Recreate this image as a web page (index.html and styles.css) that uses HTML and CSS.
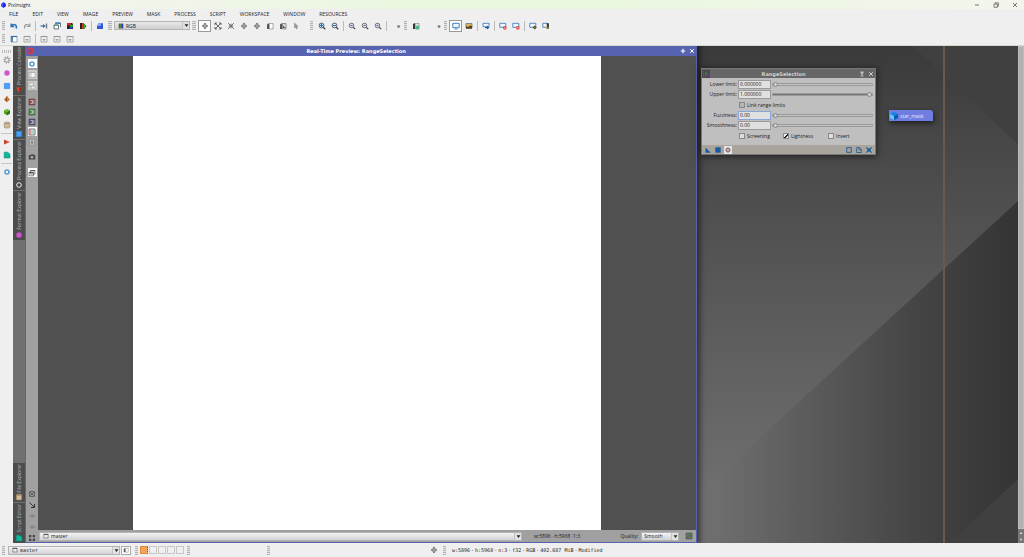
FILE: index.html
```html
<!DOCTYPE html>
<html lang="en">
<head>
<meta charset="utf-8">
<title>PixInsight</title>
<link rel="stylesheet" href="styles.css">
</head>
<body>
<svg class="sprite" aria-hidden="true">
  <symbol id="undo" viewBox="0 0 8 8"><path d="M1.200 1.500v3h3M1.500 4.200C3 1.600 7 1.800 6.400 6.500" fill="none" stroke="#2473b8" stroke-width="1.500"/></symbol>
  <symbol id="redo" viewBox="0 0 8 8"><path d="M6.800 1.500v3h-3M6.500 4.200C5 1.600 1 1.800 1.600 6.500" fill="none" stroke="#999" stroke-width="1.200"/></symbol>
  <symbol id="arrowin" viewBox="0 0 8 8"><path d="M.5 4H5" stroke="#2b6cab" stroke-width="1.200"/><path d="M3 2l2.500 2L3 6z" fill="#2b6cab"/><path d="M6.500 1.500v5" stroke="#777" stroke-width="1.400"/></symbol>
  <symbol id="windows" viewBox="0 0 8 8"><path d="M2.500 1h5v4M1 3h4.500v4H1z" fill="#fff" stroke="#456" stroke-width=".8"/><path d="M2 1.200h5.500" stroke="#2b7abd" stroke-width="1.200"/><path d="M1 3.200h4.500" stroke="#3a8b6b"/></symbol>
  <symbol id="rgb1" viewBox="0 0 8 8"><path d="M1 1h5l1 1v5H1z" fill="#222"/><path d="M1 1h4v2.500H1z" fill="#d22"/><path d="M4 2.800h3v2H4z" fill="#2a3"/><path d="M3.500 5h3v1.700h-3z" fill="#24c"/></symbol>
  <symbol id="rgb2" viewBox="0 0 8 8"><path d="M1 1h3v6H1z" fill="#222"/><path d="M3 1h2v6H3z" fill="#c32"/><path d="M5 2h1v5H5z" fill="#3a3"/><path d="M6 3l1.500 1L6 6z" fill="#24c"/></symbol>
  <symbol id="cube" viewBox="0 0 8 8"><path d="M1 4l1.500-3h4L7 3v4H1z" fill="#3157db"/><path d="M1 4l1.500-3h3L4.500 4z" fill="#8aa8ff"/></symbol>
  <symbol id="bars" viewBox="0 0 8 8"><path d="M1 1h6v6H1z" fill="#444"/><path d="M1.500 1h1.700v6H1.500z" fill="#e22"/><path d="M3.200 1h1.700v6H3.200z" fill="#2c2"/><path d="M4.900 1h1.700v6H4.900z" fill="#23d"/></symbol>
  <symbol id="pan" viewBox="0 0 8 8"><path d="M4 .8l1.600 1.800H2.400zM4 7.200l1.600-1.800H2.400zM.8 4l1.800-1.600v3.200zM7.200 4L5.400 2.400v3.200z" fill="#555"/><path d="M4 2v4M2 4h4" stroke="#777" stroke-width=".8"/></symbol>
  <symbol id="expand" viewBox="0 0 8 8"><path d="M1 3V1h2M5 1h2v2M7 5v2H5M3 7H1V5M1.200 1.200l5.600 5.600M6.800 1.200L1.200 6.800" fill="none" stroke="#555" stroke-width=".9"/></symbol>
  <symbol id="contract" viewBox="0 0 8 8"><path d="M1 1l6 6M7 1L1 7" stroke="#777" stroke-width=".9"/><path d="M3.400 1.800v1.600H1.800M4.600 1.800v1.600h1.600M3.400 6.200V4.600H1.800M4.600 6.200V4.600h1.600" fill="none" stroke="#666" stroke-width=".6"/></symbol>
  <symbol id="pages" viewBox="0 0 8 8"><path d="M3.500 1.500h3.500v5.500H3.500z" fill="#fff" stroke="#888" stroke-width=".7"/><path d="M1 2.500l2-1.500v6H1z" fill="#555"/></symbol>
  <symbol id="pages2" viewBox="0 0 8 8"><path d="M3.500 1.500h3.500v5.500H3.500z" fill="#ddd" stroke="#777" stroke-width=".8"/><path d="M1 2.500l2-1.500v6H1z" fill="#555"/><path d="M4 3.500l2.500 2.500H4z" fill="#555"/></symbol>
  <symbol id="cursor" viewBox="0 0 8 8"><path d="M2.500 1l3.600 3.400H4.500L5.400 6.500l-1 .5-.9-2.100-1 1z" fill="#999" stroke="#777" stroke-width=".4"/></symbol>
  <symbol id="zoomin" viewBox="0 0 8 8"><circle cx="3.500" cy="3.500" r="2.400" fill="#cde4f5" stroke="#456" stroke-width=".9"/><path d="M5.300 5.300L7.300 7.300" stroke="#444" stroke-width="1.300"/><path d="M3.500 2v3M2 3.500h3" stroke="#1f70b5"/></symbol>
  <symbol id="zoomout" viewBox="0 0 8 8"><circle cx="3.500" cy="3.500" r="2.400" fill="#d8e8f2" stroke="#456" stroke-width=".9"/><path d="M5.300 5.300L7.300 7.300" stroke="#444" stroke-width="1.300"/><path d="M2 3.500h3" stroke="#1f70b5"/></symbol>
  <symbol id="zoomone" viewBox="0 0 8 8"><circle cx="3.500" cy="3.500" r="2.300" fill="#e4e4ee" stroke="#666" stroke-width=".9"/><path d="M5.300 5.300L7.200 7.200" stroke="#444" stroke-width="1.200"/><path d="M2.400 3.500h2.200" stroke="#7262bb" stroke-width="1.200"/></symbol>
  <symbol id="maskok" viewBox="0 0 8 8"><path d="M1 2l2-1v6H1z" fill="#333"/><path d="M3.300 1.500H7V7H3.300z" fill="#dfe8e2" stroke="#777" stroke-width=".6"/><circle cx="5.500" cy="5.500" r="1.900" fill="#4bb98a"/></symbol>
  <symbol id="screen" viewBox="0 0 8 8"><path d="M.8 1.300h6.400v4.400H.8z" fill="#eef6ff" stroke="#427fbd"/><path d="M2.500 7h3" stroke="#427fbd"/></symbol>
  <symbol id="screenimg" viewBox="0 0 8 8"><path d="M1 1.500h6v4.500H1z" fill="#e6b64a" stroke="#57789a" stroke-width=".8"/><path d="M1 6.800V4l2 1 2-1.500 2 .5v2.800z" fill="#57451d"/></symbol>
  <symbol id="screendn" viewBox="0 0 8 8"><path d="M1 1.300h6v3.400H1z" fill="#eef6ff" stroke="#427fbd" stroke-width=".9"/><path d="M3 5h2V3.500l2.500 2.200L5 7.600V6.300H3z" fill="#225e9b"/></symbol>
  <symbol id="screenx" viewBox="0 0 8 8"><path d="M.8 1.300h6v4H.8z" fill="#eef6ff" stroke="#427fbd" stroke-width=".9"/><circle cx="5.800" cy="5.800" r="1.900" fill="#e04747"/><path d="M5 5l1.600 1.600M6.600 5L5 6.600" stroke="#fff" stroke-width=".4"/></symbol>
  <symbol id="screenlk" viewBox="0 0 8 8"><path d="M.8 1.300h6v4H.8z" fill="#eef6ff" stroke="#427fbd" stroke-width=".9"/><path d="M5.700 3.400l2 2-2 2-2-2z" fill="#3a3320"/><path d="M5.200 4.800h1v1.400h-1z" fill="#d8a831"/></symbol>
  <symbol id="screenlk2" viewBox="0 0 8 8"><path d="M.8 1.300h5v4h-5z" fill="#eef6ff" stroke="#427fbd" stroke-width=".9"/><path d="M4.500 1.500l2-.5.500 2.500-.5 3.500-2-.5.500-2z" fill="#3a3320"/><path d="M3.500 4.500h2v1.600h-2z" fill="#d8a831"/></symbol>
  <symbol id="panel" viewBox="0 0 8 8"><path d="M1 1.500h6V7H1z" fill="#fff" stroke="#8298ab" stroke-width=".8"/><path d="M.8 1.500h6.400" stroke="#386f9f" stroke-width="1.200"/><path d="M1 2h2v5H1z" fill="#4f86b5"/></symbol>
  <symbol id="panelg" viewBox="0 0 8 8"><path d="M1 1.500h6V7H1z" fill="#eee" stroke="#999" stroke-width=".8"/><path d="M.8 1.500h6.400" stroke="#999" stroke-width="1.100"/><path d="M2.500 4.600h3M4 4v2" stroke="#999" stroke-width=".9"/></symbol>
  <symbol id="gear" viewBox="0 0 8 8"><circle cx="4" cy="4" r="3" fill="none" stroke="#999" stroke-width="1.300" stroke-dasharray="1.300 1"/><circle cx="4" cy="4" r="2" fill="#eee" stroke="#999"/></symbol>
  <symbol id="dot" viewBox="0 0 8 8"><circle cx="4" cy="4" r="2.700" fill="#d152cf"/></symbol>
  <symbol id="blue" viewBox="0 0 8 8"><path d="M1.300 1.300h5.400v5.400H1.300z" fill="#48a0fa" stroke="#2d80d0" stroke-width=".5"/></symbol>
  <symbol id="pawn" viewBox="0 0 8 8"><path d="M4 .8L6 3.500l1.200 1L4 7.200.8 4.500l1.200-1z" fill="#d57c36"/><path d="M4 1v6L2 5z" fill="#8f5225"/></symbol>
  <symbol id="box3d" viewBox="0 0 8 8"><path d="M4 1l3 1.500v3L4 7.200 1 5.500v-3z" fill="#4d9b20"/><path d="M4 1l3 1.500L4 4 1 2.500z" fill="#76c43a"/><path d="M4 4v3.200l3-1.700v-3z" fill="#34711a"/></symbol>
  <symbol id="drum" viewBox="0 0 8 8"><rect x="1.300" y="1.200" width="5.400" height="5.800" rx="1.300" fill="#d2ba91" stroke="#8f8065" stroke-width=".6"/><path d="M1.600 2.500h4.800" stroke="#8f8065" stroke-width=".6"/></symbol>
  <symbol id="play" viewBox="0 0 8 8"><path d="M1.300 1.500L7 4 1.300 6.500z" fill="#e05537"/><path d="M1.300 1.500v5L3 4z" fill="#a12d20"/></symbol>
  <symbol id="teal" viewBox="0 0 8 8"><path d="M1.200 1.200h3.600l2.200 2V7H1.200z" fill="#0cb99c" stroke="#08806d" stroke-width=".5"/></symbol>
  <symbol id="ring" viewBox="0 0 8 8"><circle cx="4" cy="4" r="2" fill="#fff" stroke="#579dd3" stroke-width="1.600"/></symbol>
  <symbol id="wring" viewBox="0 0 8 8"><circle cx="4" cy="4" r="2.300" fill="#444" stroke="#eee" stroke-width="1"/></symbol>
  <symbol id="tri" viewBox="0 0 8 8"><path d="M1.200 1.500h5.600L4 6.800z" fill="#e0492d"/><path d="M4 1.500h2.800L4 6.800z" fill="#9e2c1d"/></symbol>
  <symbol id="target" viewBox="0 0 8 8"><circle cx="4" cy="4" r="2.900" fill="#64509a" stroke="#e23b48" stroke-width="1.100"/><circle cx="4" cy="4" r="1.200" fill="none" stroke="#e23b48" stroke-width=".8"/></symbol>
  <symbol id="split" viewBox="0 0 8 8"><path d="M1 1.500h6v5H1z" fill="#ddd" stroke="#999" stroke-width=".6"/><path d="M4 2h2.700v4H4z" fill="#f4f4f4"/></symbol>
  <symbol id="stack" viewBox="0 0 8 8"><path d="M1 1h4.500v3H1zM3 4h4v3H3z" fill="#eee" stroke="#999" stroke-width=".6"/></symbol>
  <symbol id="chan" viewBox="0 0 8 8"><path d="M1 1h6v6H1z" fill="currentColor"/><path d="M2.500 2.500h2v3h-2M6 2v4" fill="none" stroke="#ccc" stroke-width=".8"/><path d="M1 1h6v6H1z" fill="none" stroke="#333" stroke-opacity=".6" stroke-width=".8"/></symbol>
  <symbol id="alpha" viewBox="0 0 8 8"><path d="M1.500 1.500h5v5.500h-5z" fill="#c4c4c4" stroke="#888" stroke-width=".6"/><path d="M3 5.800L4 2.800l1 3" fill="none" stroke="#666" stroke-width=".8"/></symbol>
  <symbol id="rgbk" viewBox="0 0 8 8"><path d="M1 1h6v6H1z" fill="#ddd" stroke="#555" stroke-width=".8"/><path d="M1.500 1.500h2v5h-2z" fill="#d99"/><path d="M3.500 1.500h1.600v5H3.500z" fill="#adb"/><path d="M5.100 1.500h1.500v5H5.100z" fill="#bbd"/></symbol>
  <symbol id="camera" viewBox="0 0 8 8"><path d="M.8 2h2l.6-.8h2L6 2h1.200v4.500H.8z" fill="#444"/><circle cx="4" cy="4.200" r="1.400" fill="#bbb" stroke="#666" stroke-width=".5"/></symbol>
  <symbol id="layers" viewBox="0 0 8 8"><path d="M2.500 1.500h4.500v3.500H2.500zM1 3.300h4.500V6.800H1z" fill="#fff" stroke="#555" stroke-width=".7"/><path d="M2.500 1.600H7M1 3.600h4.500" stroke="#444" stroke-width=".9"/></symbol>
  <symbol id="fit" viewBox="0 0 8 8"><path d="M1.500 1.500h5v5h-5z" fill="none" stroke="#666"/><path d="M2.200 2.200l3.600 3.600M5.800 2.200L2.200 5.800" stroke="#444" stroke-width=".8"/></symbol>
  <symbol id="diag" viewBox="0 0 8 8"><path d="M1.500 1.500l4.500 4.500M6.500 3v3.500H3" fill="none" stroke="#333"/></symbol>
  <symbol id="plus" viewBox="0 0 8 8"><path d="M1.500 4h5M4 2v4M5.500 2.700L6.800 4 5.500 5.300" fill="none" stroke="#777" stroke-width=".7"/></symbol>
  <symbol id="frame" viewBox="0 0 8 8"><path d="M2 2h4v4H2z" fill="none" stroke="#555" stroke-width=".8"/><path d="M1 1h2v2H1zM5 1h2v2H5zM1 5h2v2H1zM5 5h2v2H5z" fill="#444"/></symbol>
  <symbol id="doc" viewBox="0 0 8 8"><path d="M1.200 1.500h5.600v5.200H1.200z" fill="#eee" stroke="#555" stroke-width=".8"/><path d="M1 2h6" stroke="#555" stroke-width="1.200"/></symbol>
  <symbol id="logo" viewBox="0 0 8 8"><path d="M4 .5l2.500 2 .3 3L4 7.500 1.200 5.500l.3-3z" fill="#1c22ee"/><path d="M4 .5L2.500 4 4 7" fill="none" stroke="#8fa0ff" stroke-width=".6"/></symbol>
  <symbol id="shade" viewBox="0 0 8 8"><path d="M1.500 1.500h5M4 2.500v3M2 6.500h4" stroke="currentColor" stroke-width="1.200"/><path d="M2 2h4L4 4.500z" fill="currentColor"/></symbol>
  <symbol id="close" viewBox="0 0 8 8"><path d="M1.500 1.500l5 5M6.500 1.500l-5 5" stroke="currentColor" stroke-width="1.300"/></symbol>
  <symbol id="add" viewBox="0 0 8 8"><path d="M4 1v6M1 4h6" stroke="currentColor" stroke-width="1.500"/></symbol>
  <symbol id="min" viewBox="0 0 8 8"><path d="M2 4h4" stroke="#555" stroke-width=".8"/></symbol>
  <symbol id="restore" viewBox="0 0 8 8"><path d="M2 3h3.300v3.300H2zM3 3V1.800h3.400v3.400H5.300" fill="none" stroke="#555" stroke-width=".7"/></symbol>
  <symbol id="x" viewBox="0 0 8 8"><path d="M2 2l4 4M6 2L2 6" stroke="#444" stroke-width=".7"/></symbol>
  <symbol id="corner" viewBox="0 0 8 8"><path d="M1.500 1.500v5.200h5.200z" fill="#155ca4"/></symbol>
  <symbol id="square" viewBox="0 0 8 8"><path d="M1.300 1.300h5.400v5.400H1.300z" fill="#155ca4"/></symbol>
  <symbol id="rt" viewBox="0 0 8 8"><circle cx="4" cy="4" r="2.100" fill="#e99a83" stroke="#60688a"/></symbol>
  <symbol id="osq" viewBox="0 0 8 8"><path d="M1.700 1.700h4.600v4.600H1.700z" fill="none" stroke="#255f96"/></symbol>
  <symbol id="odoc" viewBox="0 0 8 8"><path d="M1.700 1.500h2.600l2 2v3H1.700zM4 1.500v2.300h2.300" fill="none" stroke="#255f96" stroke-width=".9"/></symbol>
  <symbol id="reset" viewBox="0 0 8 8"><path d="M1.300 1.300l5.400 5.400M6.700 1.300L1.300 6.700" stroke="#155ca4" stroke-width="1.100"/><path d="M2.500 2.500h3v3h-3z" fill="#155ca4"/></symbol>
  <symbol id="proc" viewBox="0 0 8 8"><path d="M0 0h8v8H0z" fill="#484848"/><path d="M1.500 1v6M6.500 4v3" stroke="#793a9b"/><path d="M3.500 2v5M5 1v4" stroke="#268b2b"/></symbol>
  <symbol id="nav" viewBox="0 0 8 8"><path d="M1 1h6v6H1z" fill="#557e55" stroke="#555" stroke-width=".7"/><path d="M2 6l3-3 1.500 2" fill="none" stroke="#704d79"/></symbol>
  <symbol id="hexcube" viewBox="0 0 8 8"><path d="M4 0l4 2v4L4 8 0 6V2z" fill="#1684e6"/><path d="M4 4v4L0 6V2z" fill="#6dc5fb"/><path d="M4 4v4l4-2V2z" fill="#075eae"/></symbol>
  <symbol id="drop" viewBox="0 0 8 8"><path d="M1 2h6L4 6.500z" fill="#222"/></symbol>
</svg>

<div class="app">
  <header class="titlebar">
    <svg class="icon"><use href="#logo"/></svg>
    <span class="apptitle">PixInsight</span>
    <button class="wbtn" aria-label="Minimize"><svg class="icon"><use href="#min"/></svg></button>
    <button class="wbtn" aria-label="Restore"><svg class="icon"><use href="#restore"/></svg></button>
    <button class="wbtn" aria-label="Close"><svg class="icon"><use href="#x"/></svg></button>
  </header>

  <nav class="menubar">
    <button>FILE</button><button>EDIT</button><button>VIEW</button><button>IMAGE</button><button>PREVIEW</button><button>MASK</button><button>PROCESS</button><button>SCRIPT</button><button>WORKSPACE</button><button>WINDOW</button><button>RESOURCES</button>
  </nav>

  <div class="toolbars">
    <div class="toolbar">
      <i class="grip"></i>
      <button class="tb" aria-label="Undo"><svg class="icon"><use href="#undo"/></svg></button>
      <button class="tb" aria-label="Redo"><svg class="icon"><use href="#redo"/></svg></button>
      <i class="sep"></i>
      <button class="tb" aria-label="Identifier"><svg class="icon"><use href="#arrowin"/></svg></button>
      <button class="tb" aria-label="Duplicate"><svg class="icon"><use href="#windows"/></svg></button>
      <button class="tb" aria-label="Extract channels"><svg class="icon"><use href="#rgb1"/></svg></button>
      <button class="tb" aria-label="Split channels"><svg class="icon"><use href="#rgb2"/></svg></button>
      <i class="sep"></i>
      <button class="tb" aria-label="Color space"><svg class="icon"><use href="#cube"/></svg></button>
      <i class="grip wide"></i>
      <div class="combo channel"><svg class="icon"><use href="#bars"/></svg><select aria-label="Channel"><option>RGB</option></select><span class="drop"><svg class="icon"><use href="#drop"/></svg></span></div>
      <i class="grip wide"></i>
      <button class="tb on" aria-label="Readout"><svg class="icon"><use href="#pan"/></svg></button>
      <button class="tb" aria-label="Fit view"><svg class="icon"><use href="#expand"/></svg></button>
      <button class="tb" aria-label="Optimal fit"><svg class="icon"><use href="#contract"/></svg></button>
      <button class="tb" aria-label="Pan"><svg class="icon"><use href="#pan"/></svg></button>
      <button class="tb" aria-label="Center"><svg class="icon"><use href="#pan"/></svg></button>
      <button class="tb" aria-label="New preview"><svg class="icon"><use href="#pages"/></svg></button>
      <button class="tb" aria-label="Edit preview"><svg class="icon"><use href="#pages2"/></svg></button>
      <button class="tb" aria-label="Dynamic"><svg class="icon"><use href="#cursor"/></svg></button>
      <i class="grip spaced"></i>
      <button class="tb" aria-label="Zoom in"><svg class="icon"><use href="#zoomin"/></svg></button>
      <button class="tb" aria-label="Zoom out"><svg class="icon"><use href="#zoomout"/></svg></button>
      <i class="sep"></i>
      <button class="tb" aria-label="Zoom 1:1"><svg class="icon"><use href="#zoomone"/></svg></button>
      <button class="tb" aria-label="Zoom 2:1"><svg class="icon"><use href="#zoomone"/></svg></button>
      <button class="tb" aria-label="Zoom 3:1"><svg class="icon"><use href="#zoomone"/></svg></button>
      <i class="sep"></i>
      <button class="more">»</button>
      <i class="grip"></i>
      <button class="tb" aria-label="Enable mask"><svg class="icon"><use href="#maskok"/></svg></button>
      <button class="more far">»</button>
      <i class="grip"></i>
      <button class="tb on" aria-label="STF off"><svg class="icon"><use href="#screen"/></svg></button>
      <button class="tb" aria-label="STF auto"><svg class="icon"><use href="#screenimg"/></svg></button>
      <i class="sep"></i>
      <button class="tb" aria-label="STF store"><svg class="icon"><use href="#screendn"/></svg></button>
      <i class="sep"></i>
      <button class="tb" aria-label="Reset STF"><svg class="icon"><use href="#screenx"/></svg></button>
      <button class="tb" aria-label="Reset all STF"><svg class="icon"><use href="#screenx"/></svg></button>
      <i class="sep"></i>
      <button class="tb" aria-label="Auto stretch"><svg class="icon"><use href="#screenlk"/></svg></button>
      <button class="tb" aria-label="Auto stretch boosted"><svg class="icon"><use href="#screenlk2"/></svg></button>
    </div>
    <div class="toolbar">
      <i class="grip"></i>
      <button class="tb" aria-label="Explorer panel"><svg class="icon"><use href="#panel"/></svg></button>
      <button class="tb" aria-label="Hide panels"><svg class="icon"><use href="#panelg"/></svg></button>
      <i class="sep"></i>
      <button class="tb" aria-label="Workspace one"><svg class="icon"><use href="#panelg"/></svg></button>
      <button class="tb" aria-label="Workspace two"><svg class="icon"><use href="#panelg"/></svg></button>
      <button class="tb" aria-label="Workspace three"><svg class="icon"><use href="#panelg"/></svg></button>
    </div>
  </div>

  <main class="main">
    <div class="dock">
      <i class="hgrip"></i>
      <button aria-label="Preferences"><svg class="icon"><use href="#gear"/></svg></button>
      <button aria-label="Formats"><svg class="icon"><use href="#dot"/></svg></button>
      <button aria-label="Views"><svg class="icon"><use href="#blue"/></svg></button>
      <button aria-label="Objects"><svg class="icon"><use href="#pawn"/></svg></button>
      <button aria-label="Modules"><svg class="icon"><use href="#box3d"/></svg></button>
      <button aria-label="Files"><svg class="icon"><use href="#drum"/></svg></button>
      <hr>
      <button aria-label="Console"><svg class="icon"><use href="#play"/></svg></button>
      <button aria-label="Scripts"><svg class="icon"><use href="#teal"/></svg></button>
      <hr>
      <button aria-label="Help"><svg class="icon"><use href="#ring"/></svg></button>
    </div>

    <div class="tabs">
      <button class="tab"><span>Process Console</span><svg class="icon"><use href="#tri"/></svg></button>
      <button class="tab"><span>View Explorer</span><svg class="icon"><use href="#blue"/></svg></button>
      <button class="tab"><span>Process Explorer</span><svg class="icon"><use href="#wring"/></svg></button>
      <button class="tab"><span>Format Explorer</span><svg class="icon"><use href="#dot"/></svg></button>
      <button class="tab push"><span>File Explorer</span><svg class="icon"><use href="#drum"/></svg></button>
      <button class="tab"><span>Script Editor</span><svg class="icon"><use href="#teal"/></svg></button>
    </div>

    <div class="workspace">
      <svg class="wallpaper" viewBox="0 0 993 497" preserveAspectRatio="none" aria-hidden="true">
        <defs>
          <linearGradient id="down" x1="0" y1="0" x2="0" y2="1"><stop offset="0" stop-color="#3a3a3a"/><stop offset=".2" stop-color="#484848"/><stop offset=".9" stop-color="#6f6f6f"/></linearGradient>
          <linearGradient id="across" gradientUnits="userSpaceOnUse" x1="686" y1="0" x2="993" y2="0"><stop offset="0" stop-color="#6f6f6f"/><stop offset=".7" stop-color="#434343"/><stop offset="1" stop-color="#343434"/></linearGradient>
        </defs>
        <rect width="993" height="497" fill="url(#down)"/>
        <path d="M887 0H993V98z" fill="#404040"/>
        <path d="M993 155L620 497H993z" fill="url(#across)"/>
        <path d="M993 433L924 497H993z" fill="#404040"/>
        <path d="M918 0h2v497h-2z" fill="#695a4a"/>
      </svg>

      <section class="preview">
        <div class="pv-title">
          <svg class="icon"><use href="#target"/></svg>
          <h2>Real-Time Preview: RangeSelection</h2>
          <button aria-label="Maximize"><svg class="icon s6"><use href="#add"/></svg></button>
          <button aria-label="Close preview"><svg class="icon s6"><use href="#close"/></svg></button>
        </div>
        <div class="pv-body">
          <div class="pv-tools">
            <button class="lit" aria-label="Real time"><svg class="icon"><use href="#ring"/></svg></button>
            <button class="dim" aria-label="Split view"><svg class="icon"><use href="#split"/></svg></button>
            <button class="dim" aria-label="Stack view"><svg class="icon"><use href="#stack"/></svg></button>
            <div class="channels">
              <button class="red" aria-label="Red"><svg class="icon"><use href="#chan"/></svg></button>
              <button class="green" aria-label="Green"><svg class="icon"><use href="#chan"/></svg></button>
              <button class="navy" aria-label="Blue"><svg class="icon"><use href="#chan"/></svg></button>
              <button class="lit" aria-label="RGB"><svg class="icon"><use href="#rgbk"/></svg></button>
              <button aria-label="Alpha"><svg class="icon"><use href="#alpha"/></svg></button>
            </div>
            <button class="apart" aria-label="Snapshot"><svg class="icon"><use href="#camera"/></svg></button>
            <button class="lit" aria-label="Layers"><svg class="icon"><use href="#layers"/></svg></button>
            <button class="push" aria-label="Fit"><svg class="icon"><use href="#fit"/></svg></button>
            <button aria-label="Shrink"><svg class="icon"><use href="#diag"/></svg></button>
            <button aria-label="Zoom in"><svg class="icon"><use href="#plus"/></svg></button>
            <button aria-label="Zoom out"><svg class="icon"><use href="#plus"/></svg></button>
            <button aria-label="Zoom 1:1"><svg class="icon"><use href="#frame"/></svg></button>
          </div>
          <div class="pv-main">
            <div class="viewport"><div class="image"></div></div>
            <div class="pv-foot">
              <div class="combo view"><svg class="icon"><use href="#doc"/></svg><select aria-label="View"><option>master</option></select><span class="drop"><svg class="icon"><use href="#drop"/></svg></span></div>
              <span class="dims">w:5896 · h:5968 ·1:3</span>
              <label for="quality">Quality:</label>
              <div class="combo plain"><select id="quality"><option>Smooth</option></select><span class="drop"><svg class="icon"><use href="#drop"/></svg></span></div>
              <button class="navbtn" aria-label="Navigator"><svg class="icon"><use href="#nav"/></svg></button>
            </div>
          </div>
        </div>
      </section>

      <section class="dialog">
        <div class="dl-title">
          <svg class="icon"><use href="#proc"/></svg>
          <h2>RangeSelection</h2>
          <button aria-label="Shade"><svg class="icon s6"><use href="#shade"/></svg></button>
          <button aria-label="Close dialog"><svg class="icon s6"><use href="#close"/></svg></button>
        </div>
        <div class="dl-body">
          <div class="param"><label for="lower">Lower limit:</label><input id="lower" type="text" value="0.000000"><input type="range" min="0" max="100" value="0" aria-label="Lower limit slider"></div>
          <div class="param full"><label for="upper">Upper limit:</label><input id="upper" type="text" value="1.000000"><input type="range" min="0" max="100" value="100" aria-label="Upper limit slider"></div>
          <div class="checks"><label class="shaded"><input type="checkbox">Link range limits</label></div>
          <div class="param focus"><label for="fuzz">Fuzziness:</label><input id="fuzz" type="text" value="0.00"><input type="range" min="0" max="100" value="0" aria-label="Fuzziness slider"></div>
          <div class="param"><label for="smooth">Smoothness:</label><input id="smooth" type="text" value="0.00"><input type="range" min="0" max="100" value="0" aria-label="Smoothness slider"></div>
          <div class="checks three"><label><input type="checkbox">Screening</label><label><input type="checkbox" checked>Lightness</label><label><input type="checkbox">Invert</label></div>
        </div>
        <div class="dl-foot">
          <button aria-label="New instance"><svg class="icon"><use href="#corner"/></svg></button>
          <button aria-label="Apply"><svg class="icon"><use href="#square"/></svg></button>
          <button class="lit" aria-label="Real-time preview"><svg class="icon"><use href="#rt"/></svg></button>
          <button class="right" aria-label="Track view"><svg class="icon"><use href="#osq"/></svg></button>
          <button aria-label="Documentation"><svg class="icon"><use href="#odoc"/></svg></button>
          <button aria-label="Reset"><svg class="icon"><use href="#reset"/></svg></button>
        </div>
      </section>

      <button class="viewicon"><svg class="icon"><use href="#hexcube"/></svg><span>star_mask</span></button>
    </div>

    <div class="scroll"><span class="thumb"></span><button aria-label="Scroll up">▲</button><button aria-label="Scroll down">▼</button></div>
  </main>

  <footer class="status">
    <i class="grip"></i>
    <div class="combo mono"><svg class="icon"><use href="#doc"/></svg><select aria-label="Active view"><option>master</option></select><span class="drop"><svg class="icon"><use href="#drop"/></svg></span></div>
    <button class="pagebtn" aria-label="Previews"><svg class="icon"><use href="#pages"/></svg></button>
    <i class="grip"></i>
    <div class="spaces"><button class="current" aria-label="Workspace 1"></button><button aria-label="Workspace 2"></button><button aria-label="Workspace 3"></button><button aria-label="Workspace 4"></button><button aria-label="Workspace 5"></button></div>
    <i class="grip"></i>
    <i class="grip middle"></i>
    <div class="readout">
      <svg class="icon"><use href="#pan"/></svg>
      <i class="grip"></i>
      <p class="info"><span>w:5896</span><span>·</span><span>h:5968</span><span>·</span><span>n:3</span><span>·</span><span>f32</span><span>·</span><span>RGB</span><span>·</span><span>402.687 MiB</span><span>·</span><span>Modified</span></p>
    </div>
  </footer>
</div>
</body>
</html>
```
FILE: styles.css
```css
* { box-sizing: border-box; }
body {
  margin: 0;
  background: #efefef;
  color: #222;
  font: 5px/8px "Open Sans", "Noto Sans", sans-serif;
}
button, input, select { margin: 0; padding: 0; border: 0; background: none; color: inherit; font: inherit; }
button { display: flex; align-items: center; justify-content: center; }
h2, p { margin: 0; font-size: 5px; }
.sprite { position: absolute; width: 0; height: 0; }
.icon { display: block; flex: none; width: 8px; height: 8px; }
.s6 { width: 6px; height: 6px; }

.app { display: flex; flex-direction: column; height: 100vh; min-height: 400px; }

/* Title, menu and tool bars */
.titlebar {
  display: flex; align-items: center; height: 9px; flex: none;
  background: linear-gradient(90deg, #f4f4ee, #eaf7e0 40%, #eaf7e0 60%, #f3f5ec);
}
.apptitle { flex: 1; padding-left: 1px; }
.titlebar > .icon { width: 7px; }
.wbtn { width: 19px; height: 9px; }
.menubar { display: flex; align-items: center; gap: 14px; height: 10px; padding-left: 9px; flex: none; }
.toolbars { flex: none; height: 27px; border-bottom: 1px solid #d4d8d0; }
.toolbar { display: flex; align-items: center; height: 13px; }
.tb { width: 13px; height: 12px; flex: none; }
.on { background: #fff; border: 1px solid #999; }
.grip {
  flex: none; width: 7px; height: 9px; padding: 0 2px;
  background: content-box repeating-linear-gradient(#b4b4b4 0 1px, #e4e4e4 1px 2px);
}
.grip.wide { width: 8px; }
.grip.spaced { margin-left: 6px; }
.sep { flex: none; width: 4px; height: 10px; background: linear-gradient(#bbb, #bbb) 50% 0 / 1px 100% no-repeat; }
.more { flex: none; width: 14px; padding-left: 7px; height: 10px; font-weight: bold; }
.more.far { width: 20px; padding-left: 14px; }

.combo {
  position: relative; display: flex; align-items: center; height: 9px; padding-left: 3px; gap: 2px;
  border: 1px solid #b4b4b4; background: linear-gradient(#e8e8e8, #cfcfcf);
}
.combo > .icon { width: 6px; height: 6px; }
.combo select { appearance: none; flex: 1; min-width: 0; height: 8px; line-height: 8px; }
.drop { position: absolute; right: 0; top: 0; bottom: 0; width: 7px; display: flex; align-items: center; justify-content: center; border-left: 1px solid #c4c4c4; background: #e2e2e2; pointer-events: none; }
.drop .icon { width: 5px; height: 5px; }
.channel { width: 76px; }

/* Middle area */
.main { flex: 1; min-height: 0; display: flex; }
.dock { flex: none; width: 13px; display: flex; flex-direction: column; align-items: center; padding-top: 4px; }
.dock button { width: 13px; height: 13px; flex: none; }
.dock hr { width: 11px; height: 1px; margin: 2px 0 1px; border: 0; background: #c4c4c4; flex: none; }
.hgrip { width: 9px; height: 3px; background: repeating-linear-gradient(90deg, #bbb 0 1px, transparent 1px 2px); }

.tabs { flex: none; width: 12px; display: flex; flex-direction: column; gap: 1px; background: #707070; }
.tab {
  flex-direction: column; justify-content: flex-end; gap: 1px; padding: 1px 0;
  background: #4c4c4c; color: #bbb;
}
.tab span { writing-mode: vertical-rl; transform: rotate(180deg); line-height: 10px; white-space: nowrap; }
.push { margin-top: auto; }

.workspace { position: relative; flex: 1; min-width: 0; overflow: hidden; background: #555; }
.wallpaper { display: block; width: 100%; height: 100%; }

.scroll { flex: none; width: 6px; display: flex; flex-direction: column; background: #777; color: #ddd; }
.thumb { flex: 1; background: #b1b1b1; border: 1px solid #bdbdbd; }
.scroll button { height: 7px; font-size: 4px; }

/* Preview window */
.preview {
  position: absolute; left: 0; top: 0; bottom: 0; width: 67.7%; min-width: 320px;
  display: flex; flex-direction: column;
  border: 1px solid #5563ae; border-top: 0; box-shadow: 1px 0 6px 2px rgba(0, 0, 0, .5);
}
.pv-title { display: flex; align-items: center; flex: none; height: 10px; background: #5563b0; color: #fff; }
.pv-title h2, .dl-title h2 { flex: 1; text-align: center; font-family: "DejaVu Sans", sans-serif; }
.pv-title button, .dl-title button { width: 9px; height: 9px; }
.pv-body { flex: 1; min-height: 0; display: flex; background: #a0a0a0; }
.pv-tools { flex: none; width: 12px; display: flex; flex-direction: column; align-items: center; gap: 2px; padding-top: 3px; }
.pv-tools button { width: 9px; height: 9px; flex: none; }
.channels { display: flex; flex-direction: column; gap: 1px; margin: 5px 0 4px; }
.lit { background: #fff; }
.dim { background: #ccc; }
.red { color: #a04c4c; }
.green { color: #3c9a48; }
.navy { color: #55558a; }
.pv-tools .apart { margin-bottom: 5px; }
.pv-tools .push { margin-top: auto; }
.pv-main { flex: 1; min-width: 0; display: flex; flex-direction: column; }
.viewport { flex: 1; min-height: 0; display: flex; justify-content: center; background: #505050; }
.image { height: 100%; aspect-ratio: 5896 / 5968; background: #fff; }
.pv-foot { flex: none; height: 12px; display: flex; align-items: center; padding: 0 3px 0 1px; }
.view { width: 483px; flex: 0 1 auto; }
.view, .plain, .mono { background: linear-gradient(#f3f3f3, #d2d2d2); }
.dims { flex: 1; padding-left: 12px; white-space: nowrap; }
.plain { width: 38px; margin: 0 6px 0 3px; padding-left: 2px; flex: none; }

/* Process dialog */
.dialog { position: absolute; left: 676px; top: 22px; width: 175px; border: 1px solid #777; background: #bfbfbf; box-shadow: 0 1px 6px 1px rgba(0, 0, 0, .5); }
.dl-title { display: flex; align-items: center; height: 9px; background: #666; color: #d0d0d0; }
.dl-body { padding: 1px 2px 4px 1px; }
.param { display: grid; grid-template-columns: 34px 33px 1fr; align-items: center; column-gap: 1px; height: 10px; }
.param label { display: flex; justify-content: flex-end; white-space: nowrap; }
.param input[type=text] { width: 100%; height: 9px; padding: 0 1px; border: 1px solid #999; background: #e0e0e0; }
.focus input[type=text] { border-color: #86a5d5; }
.param input[type=range] { appearance: none; width: 100%; height: 6px; }
.param input[type=range]::-webkit-slider-runnable-track { height: 3px; border-radius: 1px; background: #c4c4c4; border: 1px solid #999; }
.full input[type=range]::-webkit-slider-runnable-track { background: #777; }
.param input[type=range]::-webkit-slider-thumb { appearance: none; width: 5px; height: 5px; margin-top: -2px; border: 1px solid #888; border-radius: 50%; background: #d0d0d0; }
.checks { display: flex; align-items: center; height: 11px; padding-left: 36px; }
.checks label { display: flex; align-items: center; gap: 2px; white-space: nowrap; }
.checks input { appearance: none; width: 6px; height: 6px; border: 1px solid #888; background: #dedede; }
.checks .shaded input { background: #b5b5b5; }
.checks input:checked { background: linear-gradient(135deg, transparent 45%, #222 45% 70%, transparent 70%), #eee; }
.three { display: grid; grid-template-columns: 44px 45px 1fr; }
.dl-foot { display: flex; align-items: center; height: 9px; padding: 0 1px; background: #aaa59c; }
.dl-foot button { width: 10px; height: 9px; }
.dl-foot .lit { width: 8px; height: 8px; margin-left: 1px; background: #e6e6e6; }
.dl-foot .right { margin-left: auto; }

.viewicon {
  position: absolute; left: 864px; top: 64px; width: 44px; height: 11px; padding-left: 1px; gap: 2px; justify-content: flex-start;
  background: #6f7de0; color: #e5e8ff; box-shadow: 1px 2px 5px rgba(0, 0, 0, .6);
  border-radius: 0 3px 0 0;
}

/* Status bar */
.status { flex: none; height: 14px; display: flex; align-items: center; font-family: "DejaVu Sans Mono", monospace; }
.mono { width: 112px; margin-left: 1px; }
.pagebtn { width: 10px; height: 9px; margin: 0 2px 0 1px; border: 1px solid #aaa; background: #fff; }
.pagebtn .icon { width: 6px; height: 6px; }
.spaces { display: flex; gap: 1px; }
.spaces button { width: 8px; height: 8px; border: 1px solid #c8c8c8; }
.spaces .current { background: #f6a354; border-color: #e08d3f; border-right: 1px dotted #387a28; }
.status .spaces + .grip { margin-left: 1px; }
.middle { margin-left: 73px; }
.readout { flex: 1; display: flex; align-items: center; gap: 3px; padding-left: 158px; }
.info { display: flex; gap: 1px; padding-left: 1px; white-space: nowrap; }
```
